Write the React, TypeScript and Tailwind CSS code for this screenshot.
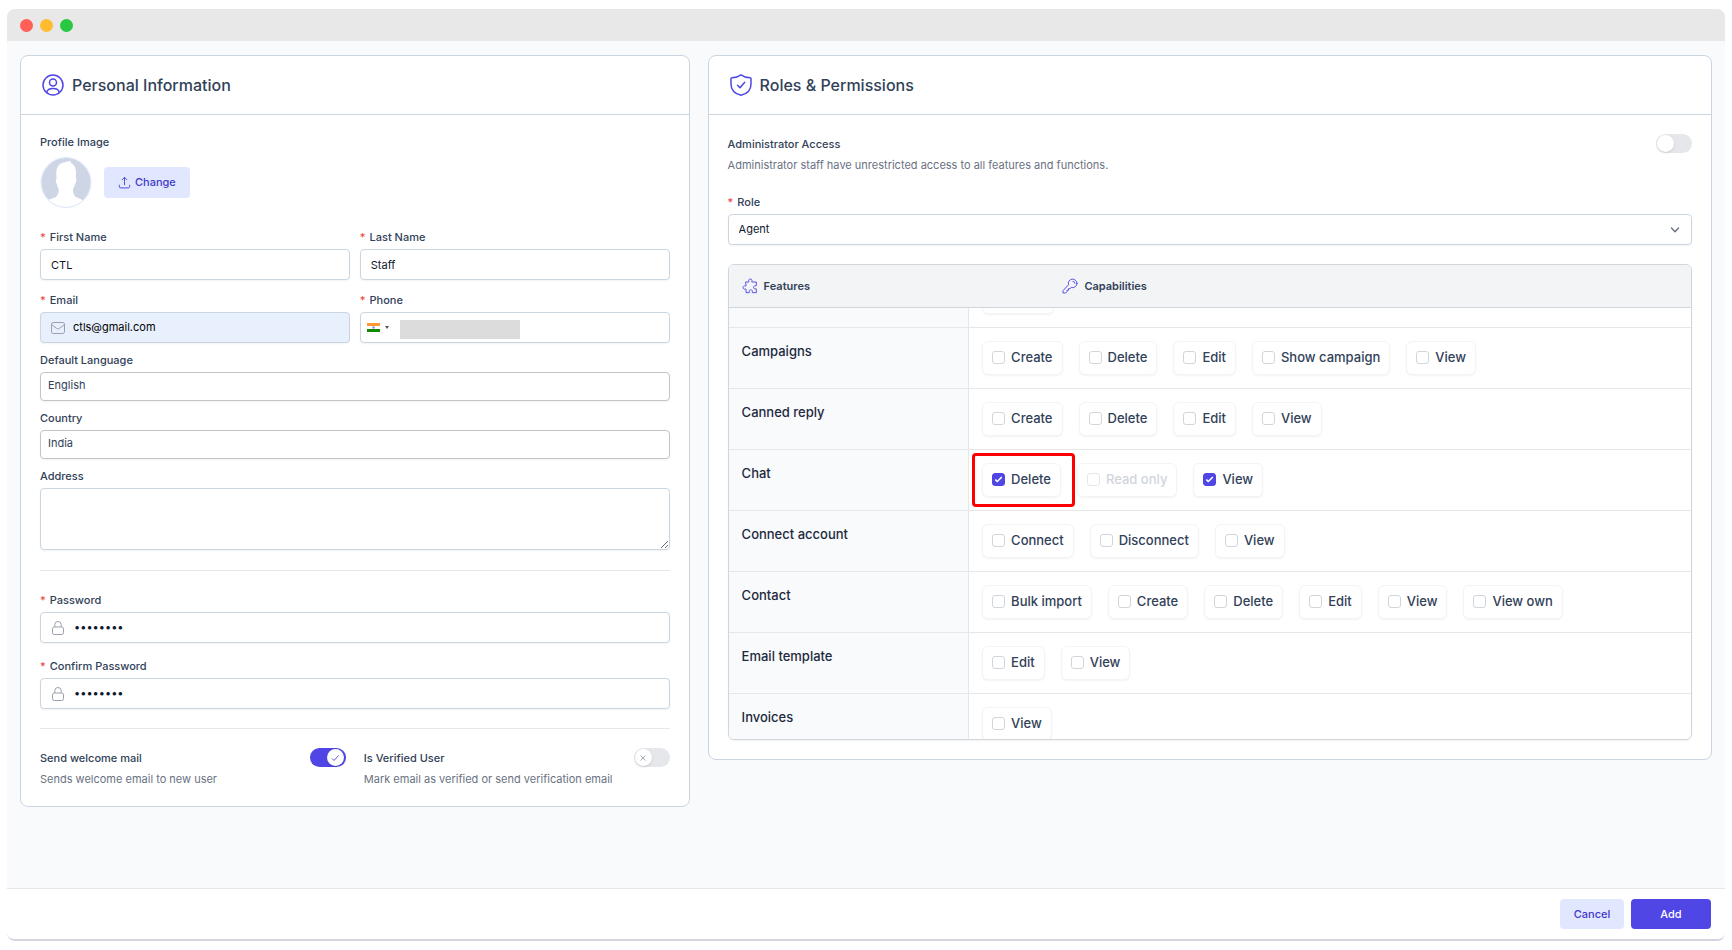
import { useEffect, useRef, useState } from "react";
import type { ReactNode } from "react";

interface Capability {
  label: string;
  checked?: boolean;
  disabled?: boolean;
  highlighted?: boolean;
}

interface Feature {
  name: string;
  capabilities: Capability[];
}

const features: Feature[] = [
  { name: "", capabilities: [{ label: "" }] },
  {
    name: "Campaigns",
    capabilities: [
      { label: "Create" },
      { label: "Delete" },
      { label: "Edit" },
      { label: "Show campaign" },
      { label: "View" },
    ],
  },
  {
    name: "Canned reply",
    capabilities: [
      { label: "Create" },
      { label: "Delete" },
      { label: "Edit" },
      { label: "View" },
    ],
  },
  {
    name: "Chat",
    capabilities: [
      { label: "Delete", checked: true, highlighted: true },
      { label: "Read only", disabled: true },
      { label: "View", checked: true },
    ],
  },
  {
    name: "Connect account",
    capabilities: [
      { label: "Connect" },
      { label: "Disconnect" },
      { label: "View" },
    ],
  },
  {
    name: "Contact",
    capabilities: [
      { label: "Bulk import" },
      { label: "Create" },
      { label: "Delete" },
      { label: "Edit" },
      { label: "View" },
      { label: "View own" },
    ],
  },
  {
    name: "Email template",
    capabilities: [{ label: "Edit" }, { label: "View" }],
  },
  { name: "Invoices", capabilities: [{ label: "View" }] },
];

const inputClass =
  "block h-[31px] w-full rounded border border-slate-300 bg-white px-[10px] text-[11px] text-slate-900 shadow-xs outline-none focus:border-[#4f46e5]";

const selectClass =
  "block h-[29px] w-full appearance-none rounded border border-[#c4c4c4] bg-white px-[7px] pb-[3px] text-[11px] text-slate-700 shadow-xs outline-none";

function UserCircleIcon() {
  return (
    <svg
      viewBox="0 0 24 24"
      className="h-6 w-6 text-[#4f46e5]"
      fill="none"
      stroke="currentColor"
      strokeWidth="1.5"
    >
      <circle cx="12" cy="12" r="10" />
      <circle cx="12" cy="9.500" r="3.500" />
      <path d="M5.800 19.200c.6-2.800 3-3.700 6.200-3.700s5.600.9 6.200 3.700" />
    </svg>
  );
}

function ShieldIcon() {
  return (
    <svg
      viewBox="0 0 24 24"
      className="h-6 w-6 text-[#4f46e5]"
      fill="none"
      stroke="currentColor"
      strokeWidth="1.5"
      strokeLinejoin="round"
      strokeLinecap="round"
    >
      <path d="M12 1.800C9.500 3.700 6.500 4.500 2.800 4.800c-.6 0-.8.4-.8.900V11c0 5.800 4 9.800 10 11.300 6-1.500 10-5.500 10-11.300V5.700c0-.5-.2-.9-.8-.9C17.500 4.500 14.500 3.700 12 1.800z" />
      <path d="M8.500 12.300l2.500 2.500 4.700-5.600" />
    </svg>
  );
}

function PuzzleIcon() {
  return (
    <svg
      viewBox="0 0 24 24"
      className="h-4 w-4 text-[#4f46e5]"
      fill="none"
      stroke="currentColor"
      strokeWidth="1.4"
      strokeLinejoin="round"
      strokeLinecap="round"
    >
      <path d="M6 6h4.200c.3 0 .4-.4.200-.7A2.500 2.500 0 1 1 14.600 5.300c-.2.300-.1.700.2.700H21.500v5.500c0 .4-.4.500-.8.300a2.400 2.400 0 1 0 0 4.400c.4-.2.800 0 .8.300V22H15.500c-.4 0-.4-.4-.2-.8a2.400 2.400 0 1 0-4.200 0c.2.400.1.800-.3.800H6v-5.200c0-.4-.4-.5-.8-.3a2.500 2.500 0 1 1 0-4.500c.4.200.8.100.8-.300z" />
    </svg>
  );
}

function KeyIcon() {
  return (
    <svg
      viewBox="0 0 24 24"
      className="h-4 w-4 text-[#4f46e5]"
      fill="none"
      stroke="currentColor"
      strokeWidth="1.4"
      strokeLinejoin="round"
      strokeLinecap="round"
    >
      <path d="M22.500 8a6.500 6.500 0 0 1-8.600 6.200L12 16H9.800v2.200H7.500v2.300L5.500 22.500H1.500V19l8.300-8.900A6.500 6.500 0 1 1 22.500 8z" />
      <path d="M16.500 5a3 3 0 0 1 2.800 2.800" />
    </svg>
  );
}

function UploadIcon() {
  return (
    <svg
      viewBox="0 0 24 24"
      className="h-[13px] w-[13px]"
      fill="none"
      stroke="currentColor"
      strokeWidth="1.6"
      strokeLinecap="round"
      strokeLinejoin="round"
    >
      <path d="M12 16V2.500M7.500 7L12 2.500 16.500 7M2.500 17v2.500a2.500 2.500 0 0 0 2.500 2.500h14a2.500 2.500 0 0 0 2.500-2.500V17" />
    </svg>
  );
}

function MailIcon() {
  return (
    <svg
      viewBox="0 0 14 12"
      className="h-3 w-[14px] text-gray-400"
      fill="none"
      stroke="currentColor"
    >
      <rect x=".5" y=".5" width="13" height="11" rx="1.800" />
      <path d="M.8 2.800l4.700 3.500c1 .700 2 .700 3 0l4.700-3.500" />
    </svg>
  );
}

function LockIcon() {
  return (
    <svg
      viewBox="0 0 14 14"
      className="h-[14px] w-[14px] text-gray-400"
      fill="none"
      stroke="currentColor"
    >
      <rect x="1.500" y="6" width="11" height="7.500" rx="1.800" />
      <path d="M3.800 6V3.700a3.200 3.200 0 0 1 6.400 0V6" />
    </svg>
  );
}

function Avatar() {
  return (
    <svg viewBox="0 0 52 52" className="h-[51px] w-[52px]">
      <defs>
        <clipPath id="avatar-clip">
          <circle cx="26" cy="26" r="25" />
        </clipPath>
      </defs>
      <g clipPath="url(#avatar-clip)">
        <rect width="52" height="52" fill="#ced5e5" />
        <path
          fill="#fff"
          d="M16.500 22c-.8-6-.8-11 3-14.500C22.500 5 27 5 31 4c-.5 1-.5 1.500.3 2 4.500 2.500 5.500 7 4.700 15.500.9.500.8 4-.8 6.200-.6 2.500-1.400 4-2.200 5.300.2 3 1 6 2.500 7.500 2 1.300 5 1.500 7.500 3.500L36 54H15L8 44c3-1.800 6-2 8-3.500 1.700-1.700 2.700-4.500 2.800-7.500-.9-1.400-1.600-3-2-5.300-1.500-1.700-1.600-4.900-.3-5.700z"
        />
      </g>
      <circle cx="26" cy="26" r="25.500" fill="none" stroke="#dde4fb" />
    </svg>
  );
}

function FieldLabel({
  htmlFor,
  required,
  children,
}: {
  htmlFor: string;
  required?: boolean;
  children: ReactNode;
}) {
  return (
    <label
      htmlFor={htmlFor}
      className="mb-1 flex gap-1 text-[11px] leading-4 font-medium text-slate-700"
    >
      {required && <span className="text-[#ef4444]">*</span>}
      {children}
    </label>
  );
}

function Toggle({
  id,
  defaultChecked = false,
  withIcon = false,
}: {
  id: string;
  defaultChecked?: boolean;
  withIcon?: boolean;
}) {
  const [on, setOn] = useState(defaultChecked);
  return (
    <span className="relative h-[19px] w-9 shrink-0">
      <input
        id={id}
        type="checkbox"
        role="switch"
        checked={on}
        onChange={(e) => setOn(e.target.checked)}
        className="block h-full w-full cursor-pointer appearance-none rounded-full bg-gray-200 checked:bg-[#4f46e5]"
      />
      <span
        className={`pointer-events-none absolute top-px flex h-[17px] w-[17px] items-center justify-center rounded-full bg-white shadow-sm ${
          on ? "right-[2px] text-[#4f46e5]" : "left-px text-gray-400"
        }`}
      >
        {withIcon && (
          <svg
            viewBox="0 0 8 8"
            className="h-2 w-2"
            fill="none"
            stroke="currentColor"
            strokeWidth="0.900"
          >
            {on ? (
              <path d="M1 4.500L3 6.500 7.500 1.500" />
            ) : (
              <path d="M1.500 1.500l5 5M6.500 1.500l-5 5" />
            )}
          </svg>
        )}
      </span>
    </span>
  );
}

function ToggleField({
  id,
  title,
  description,
  defaultChecked,
  withIcon,
}: {
  id: string;
  title: string;
  description: string;
  defaultChecked?: boolean;
  withIcon?: boolean;
}) {
  return (
    <div className="flex items-start justify-between">
      <div className="text-[11px] leading-5">
        <label htmlFor={id} className="block font-medium text-slate-700">
          {title}
        </label>
        <p className="mt-px text-gray-500">{description}</p>
      </div>
      <Toggle id={id} defaultChecked={defaultChecked} withIcon={withIcon} />
    </div>
  );
}

function CapabilityChip({ capability }: { capability: Capability }) {
  const { label, checked, disabled, highlighted } = capability;
  return (
    <label
      className={`relative flex h-[34px] items-center gap-[6px] rounded-md border border-gray-100 bg-white px-[9px] text-[13px] font-medium shadow-xs ${
        disabled ? "text-gray-300" : "text-slate-700"
      } ${label ? "" : "w-[72px]"}`}
    >
      <span className="relative h-[13px] w-[13px]">
        <input
          type="checkbox"
          defaultChecked={checked}
          disabled={disabled}
          className="peer block h-full w-full appearance-none rounded-[3px] border border-gray-300 bg-white checked:border-[#4f46e5] checked:bg-[#4f46e5] disabled:border-gray-200"
        />
        <svg
          viewBox="0 0 16 16"
          className="pointer-events-none absolute inset-0 hidden h-full w-full peer-checked:block"
          fill="white"
        >
          <path d="M12.200 4.800a1 1 0 0 1 0 1.400l-5 5a1 1 0 0 1-1.400 0l-2-2a1 1 0 0 1 1.400-1.400L6.500 9.100l4.300-4.300a1 1 0 0 1 1.400 0z" />
        </svg>
      </span>
      {label}
      {highlighted && (
        <span className="pointer-events-none absolute -top-[11px] -right-[15px] -bottom-[11px] -left-[11px] rounded-sm border-3 border-[#ff0000]" />
      )}
    </label>
  );
}

function Card({
  icon,
  title,
  children,
}: {
  icon: ReactNode;
  title: string;
  children: ReactNode;
}) {
  return (
    <section className="rounded-lg border border-slate-300 bg-white">
      <header className="flex h-[59px] items-center gap-[7px] border-b border-slate-300 px-5">
        {icon}
        <h2 className="text-base font-medium text-slate-700">{title}</h2>
      </header>
      <div className="px-[19px] pt-[19px]">{children}</div>
    </section>
  );
}

function PersonalInformation() {
  return (
    <Card icon={<UserCircleIcon />} title="Personal Information">
      <p className="text-[11px] leading-4 font-medium text-slate-700">
        Profile Image
      </p>
      <div className="mt-[7px] flex items-center gap-3">
        <Avatar />
        <button
          type="button"
          className="flex h-[31px] items-center gap-1 rounded bg-indigo-100 px-[14px] text-[11px] font-medium text-[#4338ca]"
        >
          <UploadIcon />
          Change
        </button>
      </div>

      <div className="mt-[21px] grid grid-cols-2 gap-x-[10px] gap-y-3">
        <div>
          <FieldLabel htmlFor="first-name" required>
            First Name
          </FieldLabel>
          <input id="first-name" className={inputClass} defaultValue="CTL" />
        </div>
        <div>
          <FieldLabel htmlFor="last-name" required>
            Last Name
          </FieldLabel>
          <input id="last-name" className={inputClass} defaultValue="Staff" />
        </div>
        <div>
          <FieldLabel htmlFor="email" required>
            Email
          </FieldLabel>
          <div className="flex h-[31px] items-center gap-2 rounded border border-slate-300 bg-[#e8f0fe] px-[10px] shadow-xs">
            <MailIcon />
            <input
              id="email"
              type="email"
              className="min-w-0 flex-1 bg-transparent text-[11px] text-black outline-none"
              defaultValue="ctls@gmail.com"
            />
          </div>
        </div>
        <div>
          <FieldLabel htmlFor="phone" required>
            Phone
          </FieldLabel>
          <div className="flex h-[31px] items-center rounded border border-slate-300 bg-white px-[6px] shadow-xs">
            <button
              type="button"
              aria-label="Country code"
              className="flex items-center gap-[5px]"
            >
              <svg viewBox="0 0 13 9" className="h-[9px] w-[13px]">
                <rect width="13" height="9" fill="#fff" />
                <rect width="13" height="3" fill="#ff9933" />
                <rect y="6" width="13" height="3" fill="#128807" />
                <circle cx="6.500" cy="4.500" r="1.200" fill="#8d8dc9" />
              </svg>
              <svg viewBox="0 0 4 3" className="h-[3px] w-1">
                <path d="M0 0h4L2 3z" fill="#555" />
              </svg>
            </button>
            <span className="mt-[3px] ml-[11px] h-[19px] w-[120px] bg-[#dcdcdc]" />
            <input
              id="phone"
              type="tel"
              className="min-w-0 flex-1 bg-transparent text-[11px] outline-none"
            />
          </div>
        </div>
      </div>

      <div className="mt-[9px] space-y-[9px]">
        <div>
          <FieldLabel htmlFor="language">Default Language</FieldLabel>
          <select id="language" className={selectClass}>
            <option>English</option>
          </select>
        </div>
        <div>
          <FieldLabel htmlFor="country">Country</FieldLabel>
          <select id="country" className={selectClass}>
            <option>India</option>
          </select>
        </div>
        <div>
          <FieldLabel htmlFor="address">Address</FieldLabel>
          <textarea
            id="address"
            className="block h-[62px] w-full rounded border border-slate-300 bg-white px-[10px] py-2 text-[11px] shadow-xs outline-none"
          />
        </div>
      </div>

      <div className="mt-5 space-y-[15px] border-t border-gray-200 pt-[21px]">
        {[
          { id: "password", label: "Password" },
          { id: "confirm-password", label: "Confirm Password" },
        ].map((field) => (
          <div key={field.id}>
            <FieldLabel htmlFor={field.id} required>
              {field.label}
            </FieldLabel>
            <div className="flex h-[31px] items-center gap-[9px] rounded border border-slate-300 bg-white px-[10px] shadow-xs">
              <LockIcon />
              <input
                id={field.id}
                type="password"
                className="min-w-0 flex-1 bg-transparent text-[11px] text-slate-900 outline-none"
                defaultValue="password"
              />
            </div>
          </div>
        ))}
      </div>

      <div className="mt-[19px] grid grid-cols-2 gap-[18px] border-t border-gray-200 pt-[19px] pb-[17px]">
        <ToggleField
          id="welcome-mail"
          title="Send welcome mail"
          description="Sends welcome email to new user"
          defaultChecked
          withIcon
        />
        <ToggleField
          id="verified"
          title="Is Verified User"
          description="Mark email as verified or send verification email"
          withIcon
        />
      </div>
    </Card>
  );
}

function PermissionsTable() {
  const scroller = useRef<HTMLDivElement>(null);

  useEffect(() => {
    if (scroller.current) scroller.current.scrollTop = 41;
  }, []);

  return (
    <div className="mt-[19px] mb-[19px] overflow-hidden rounded-md border border-gray-300 shadow-xs">
      <table className="w-full table-fixed">
        <thead className="bg-gray-100">
          <tr className="h-[42px] border-b border-gray-300 text-left text-[11px] text-slate-700">
            <th className="w-1/3 px-[13px] font-semibold">
              <span className="flex items-center gap-[6px]">
                <PuzzleIcon />
                Features
              </span>
            </th>
            <th className="px-[13px] font-semibold">
              <span className="flex items-center gap-[6px]">
                <KeyIcon />
                Capabilities
              </span>
            </th>
          </tr>
        </thead>
      </table>
      <div
        ref={scroller}
        className="h-[431px] overflow-y-auto [scrollbar-width:none]"
      >
        <table className="w-full table-fixed">
          <tbody>
            {features.map((feature, index) => (
              <tr key={index} className="border-b border-gray-200">
                <td className="w-60 border-r border-gray-200 bg-slate-50 px-[13px] pt-[13px] align-top text-[13px] leading-5 font-medium text-slate-800">
                  {feature.name}
                </td>
                <td className="px-[13px] py-[13px]">
                  <div className="flex flex-wrap gap-4">
                    {feature.capabilities.map((capability, i) => (
                      <CapabilityChip key={i} capability={capability} />
                    ))}
                  </div>
                </td>
              </tr>
            ))}
          </tbody>
        </table>
      </div>
    </div>
  );
}

function RolesPermissions() {
  return (
    <Card icon={<ShieldIcon />} title="Roles & Permissions">
      <ToggleField
        id="admin-access"
        title="Administrator Access"
        description="Administrator staff have unrestricted access to all features and functions."
      />
      <div className="mt-[19px]">
        <FieldLabel htmlFor="role" required>
          Role
        </FieldLabel>
        <div className="relative">
          <select id="role" className={`${inputClass} appearance-none`}>
            <option>Agent</option>
          </select>
          <svg
            viewBox="0 0 10 6"
            className="pointer-events-none absolute top-[13px] right-3 h-[6px] w-[10px] text-gray-500"
            fill="none"
            stroke="currentColor"
            strokeWidth="1.400"
            strokeLinecap="round"
            strokeLinejoin="round"
          >
            <path d="M1.500 1L5 4.700 8.500 1" />
          </svg>
        </div>
      </div>
      <PermissionsTable />
    </Card>
  );
}

export default function App() {
  return (
    <div className="flex min-h-screen flex-col bg-white px-[7px] pt-[9px] pb-[9px] font-['Inter',sans-serif]">
      <div className="flex flex-1 flex-col overflow-hidden rounded-lg border-b-2 border-[#d5d4e0]">
        <div className="flex h-8 items-center gap-[7px] bg-[#e8e8e8] px-[13px]">
          <span className="h-[13px] w-[13px] rounded-full bg-[#ff5f57]" />
          <span className="h-[13px] w-[13px] rounded-full bg-[#febc2e]" />
          <span className="h-[13px] w-[13px] rounded-full bg-[#28c840]" />
        </div>
        <main className="grid flex-1 grid-cols-[2fr_3fr] items-start gap-[18px] bg-slate-50 px-[13px] pt-[14px] pb-6">
          <PersonalInformation />
          <RolesPermissions />
        </main>
        <footer className="flex justify-end gap-[7px] border-t border-gray-200 bg-white px-[14px] py-[10px] text-[11px] font-medium">
          <button
            type="button"
            className="h-[30px] w-16 rounded bg-indigo-100 text-[#4338ca]"
          >
            Cancel
          </button>
          <button
            type="button"
            className="h-[30px] w-20 rounded bg-[#4f46e5] text-white"
          >
            Add
          </button>
        </footer>
      </div>
    </div>
  );
}
